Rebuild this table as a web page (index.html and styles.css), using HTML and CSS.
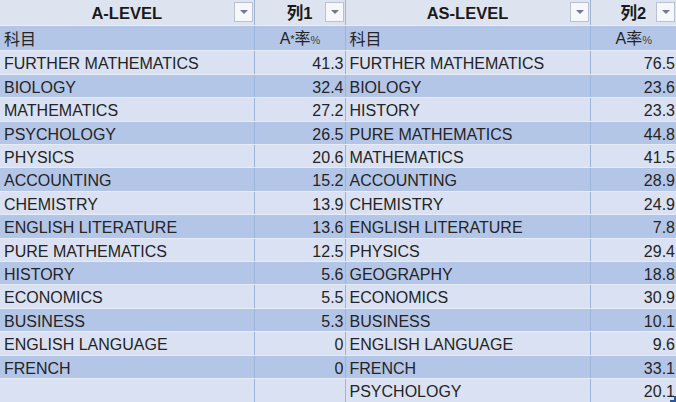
FILE: index.html
```html
<!DOCTYPE html>
<html lang="zh-CN">
<head>
<meta charset="utf-8">
<title>A-LEVEL / AS-LEVEL</title>
<link rel="stylesheet" href="styles.css">
</head>
<body>
<div class="sheet">
  <table class="grid">
    <colgroup>
      <col class="c-name1"><col class="c-num1"><col class="c-name2"><col class="c-num2">
    </colgroup>
    <thead>
      <tr class="head">
        <th><span class="htext">A-LEVEL</span><span class="dd"></span></th>
        <th><span class="htext">列1</span><span class="dd"></span></th>
        <th><span class="htext">AS-LEVEL</span><span class="dd"></span></th>
        <th><span class="htext">列2</span><span class="dd"></span></th>
      </tr>
    </thead>
    <tbody>
      <tr class="dark"><td>科目</td><td class="ctr">A<span class="star">*</span>率<span class="pct">%</span></td><td>科目</td><td class="ctr">A率<span class="pct">%</span></td></tr>
      <tr class="light"><td>FURTHER MATHEMATICS</td><td class="num">41.3</td><td>FURTHER MATHEMATICS</td><td class="num">76.5</td></tr>
      <tr class="dark"><td>BIOLOGY</td><td class="num">32.4</td><td>BIOLOGY</td><td class="num">23.6</td></tr>
      <tr class="light"><td>MATHEMATICS</td><td class="num">27.2</td><td>HISTORY</td><td class="num">23.3</td></tr>
      <tr class="dark"><td>PSYCHOLOGY</td><td class="num">26.5</td><td>PURE MATHEMATICS</td><td class="num">44.8</td></tr>
      <tr class="light"><td>PHYSICS</td><td class="num">20.6</td><td>MATHEMATICS</td><td class="num">41.5</td></tr>
      <tr class="dark"><td>ACCOUNTING</td><td class="num">15.2</td><td>ACCOUNTING</td><td class="num">28.9</td></tr>
      <tr class="light"><td>CHEMISTRY</td><td class="num">13.9</td><td>CHEMISTRY</td><td class="num">24.9</td></tr>
      <tr class="dark"><td>ENGLISH LITERATURE</td><td class="num">13.6</td><td>ENGLISH LITERATURE</td><td class="num">7.8</td></tr>
      <tr class="light"><td>PURE MATHEMATICS</td><td class="num">12.5</td><td>PHYSICS</td><td class="num">29.4</td></tr>
      <tr class="dark"><td>HISTORY</td><td class="num">5.6</td><td>GEOGRAPHY</td><td class="num">18.8</td></tr>
      <tr class="light"><td>ECONOMICS</td><td class="num">5.5</td><td>ECONOMICS</td><td class="num">30.9</td></tr>
      <tr class="dark"><td>BUSINESS</td><td class="num">5.3</td><td>BUSINESS</td><td class="num">10.1</td></tr>
      <tr class="light"><td>ENGLISH LANGUAGE</td><td class="num">0</td><td>ENGLISH LANGUAGE</td><td class="num">9.6</td></tr>
      <tr class="dark"><td>FRENCH</td><td class="num">0</td><td>FRENCH</td><td class="num">33.1</td></tr>
      <tr class="light last"><td></td><td></td><td>PSYCHOLOGY</td><td class="num">20.1<span class="handle"></span></td></tr>
    </tbody>
  </table>
</div>
</body>
</html>
```

FILE: styles.css
```css
html, body {
  margin: 0;
  padding: 0;
  background: #ffffff;
}

.sheet {
  width: 676px;
  height: 402px;
  overflow: hidden;
}

.grid {
  width: 676px;
  border-collapse: collapse;
  table-layout: fixed;
  font-family: "Liberation Sans", "Noto Sans CJK SC", sans-serif;
  font-size: 16px;
  color: #242424;
}

.c-name1 { width: 254px; }
.c-num1 { width: 91px; }
.c-name2 { width: 245px; }
.c-num2 { width: 86px; }

.grid th,
.grid td {
  padding: 0 3px 0 4px;
  border-right: 1px solid #9cb3dc;
  border-bottom: 1px solid #e6ecf6;
  white-space: nowrap;
  overflow: visible;
}

.grid th:last-child,
.grid td:last-child {
  border-right: none;
}

.head th {
  background: #dee4ef;
  font-weight: bold;
  font-size: 16.5px;
  color: #1a1a1a;
  text-align: center;
  position: relative;
  padding: 0;
  height: 23px;
  line-height: 23px;
  border-bottom: 1px solid #e9eef6;
}

.htext {
  display: inline-block;
  padding-top: 3px;
  line-height: 20px;
}

.dd {
  position: absolute;
  right: 1px;
  top: 2px;
  width: 17px;
  height: 18px;
  background: #f5f7fb;
  border: 1px solid #b8c2d1;
}

.dd::after {
  content: "";
  position: absolute;
  left: 5px;
  top: 7px;
  border-left: 4px solid transparent;
  border-right: 4px solid transparent;
  border-top: 4px solid #707a88;
}

.grid tbody td {
  padding-top: 3px;
  padding-bottom: 0;
  line-height: 19.4px;
  vertical-align: middle;
}

.dark { background: #b4c6e7; }
.light { background: #d9e1f2; }

.last td {
  border-bottom: 1px solid #8faadc;
}

.num {
  text-align: right;
  padding-right: 1px !important;
}

.ctr {
  text-align: center;
}

.star {
  font-size: 11px;
  vertical-align: 1px;
}

.pct {
  font-size: 11px;
  color: #444;
}

.grid td.num:last-child {
  position: relative;
}

.handle {
  position: absolute;
  right: 0;
  bottom: 0;
  width: 4px;
  height: 4px;
  border-right: 2px solid #2f5597;
  border-bottom: 2px solid #2f5597;
}
```
